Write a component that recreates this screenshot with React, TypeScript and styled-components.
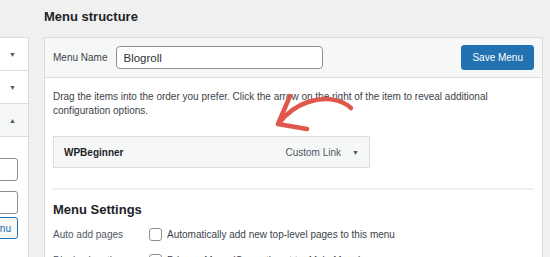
import React from "react";
import styled, { createGlobalStyle } from "styled-components";

const Global = createGlobalStyle`
  html, body {
    margin: 0;
    padding: 0;
    background: #f0f0f1;
  }
  body {
    font-family: "Liberation Sans", Arial, sans-serif;
    color: #3c434a;
    font-size: 10px;
  }
`;

const Page = styled.div`
  display: flex;
  align-items: flex-start;
  width: 550px;
  height: 257px;
  overflow: hidden;
  position: relative;
`;

const Side = styled.div`
  margin-top: 37px;
  width: 28px;
  flex-shrink: 0;
  display: flex;
  justify-content: flex-end;
  overflow: hidden;
  background: #fff;
  border-right: 1px solid #dcdcde;
  border-top: 1px solid #dcdcde;
  height: 240px;
`;

const SideInner = styled.div`
  width: 220px;
  flex-shrink: 0;
  display: flex;
  flex-direction: column;
`;

const SideRow = styled.div<{ $open?: boolean }>`
  height: 32px;
  border-bottom: 1px solid #dcdcde;
  background: ${({ $open }) => ($open ? "#f6f7f7" : "#fff")};
  display: flex;
  align-items: center;
  justify-content: flex-end;
  padding-right: 12px;
  color: #50575e;
  font-size: 7px;
`;

const SideBody = styled.div`
  display: flex;
  flex-direction: column;
  align-items: flex-end;
  padding: 21px 10px 0 0;
  gap: 10px;
`;

const SideInput = styled.div`
  width: 180px;
  height: 21px;
  border: 1px solid #8c8f94;
  border-radius: 3px;
  background: #fff;
`;

const SideButton = styled.div`
  margin-top: -7px;
  height: 20px;
  padding: 0 6px;
  border: 1px solid #2271b1;
  border-radius: 3px;
  background: #f6f7f7;
  color: #2271b1;
  display: flex;
  align-items: center;
  font-size: 10px;
`;

const Main = styled.div`
  margin-left: 15px;
  width: 499px;
  flex-shrink: 0;
`;

const Title = styled.h2`
  margin: 0;
  padding-top: 9px;
  height: 28px;
  font-size: 13px;
  line-height: 16px;
  font-weight: 700;
  color: #1d2327;
`;

const Panel = styled.div`
  background: #fff;
  border: 1px solid #dcdcde;
  border-bottom: none;
`;

const Header = styled.div`
  height: 39px;
  background: #f6f7f7;
  border-bottom: 1px solid #dcdcde;
  display: flex;
  align-items: center;
  padding: 0 8px;
  gap: 9px;
`;

const Label = styled.label`
  color: #3c434a;
  font-size: 10px;
`;

const NameInput = styled.div`
  width: 193px;
  height: 21px;
  padding: 0 6px;
  border: 1px solid #8c8f94;
  border-radius: 4px;
  background: #fff;
  display: flex;
  align-items: center;
  font-size: 11.5px;
  color: #2c3338;
`;

const SaveButton = styled.button`
  margin-left: auto;
  height: 25px;
  padding: 0 10px;
  border: 1px solid #2271b1;
  border-radius: 3px;
  background: #2271b1;
  color: #fff;
  font-family: inherit;
  font-size: 10px;
`;

const Body = styled.div`
  padding: 12px 8px 0 8px;
`;

const Help = styled.p`
  margin: 0;
  font-size: 10px;
  line-height: 14px;
  color: #3c434a;
`;

const Item = styled.div`
  margin-top: 18px;
  width: 295px;
  height: 30px;
  border: 1px solid #dcdcde;
  background: #f6f7f7;
  display: flex;
  align-items: center;
  padding: 0 10px;
`;

const ItemTitle = styled.span`
  font-weight: 700;
  color: #1d2327;
  font-size: 10px;
`;

const ItemType = styled.span`
  margin-left: auto;
  color: #50575e;
  font-size: 10px;
`;

const Caret = styled.span`
  margin-left: 11px;
  color: #50575e;
  font-size: 7px;
`;

const Divider = styled.hr`
  margin: 20px 0 0 0;
  border: none;
  border-top: 2px solid #f0f0f1;
`;

const SettingsTitle = styled.h3`
  margin: 0;
  padding-top: 12px;
  font-size: 13px;
  line-height: 16px;
  font-weight: 700;
  color: #1d2327;
`;

const Settings = styled.div`
  display: flex;
  flex-direction: column;
  gap: 4px;
  margin-top: 5px;
`;

const SettingRow = styled.div`
  display: flex;
  align-items: center;
  height: 22px;
`;

const SettingLabel = styled.span`
  width: 96px;
  flex-shrink: 0;
  color: #50575e;
  font-size: 10px;
`;

const Check = styled.span`
  width: 11px;
  height: 11px;
  border: 1px solid #8c8f94;
  border-radius: 3px;
  background: #fff;
  margin-right: 5px;
  flex-shrink: 0;
`;

const CheckText = styled.span`
  font-size: 10px;
  color: #3c434a;
`;

const Arrow = styled.svg`
  position: absolute;
  left: 268px;
  top: 88px;
  pointer-events: none;
`;

export default function App() {
  return (
    <>
      <Global />
      <Page>
        <Side>
          <SideInner>
            <SideRow>▼</SideRow>
            <SideRow>▼</SideRow>
            <SideRow $open>▲</SideRow>
            <SideBody>
              <SideInput />
              <SideInput />
              <SideButton>Add to Menu</SideButton>
            </SideBody>
          </SideInner>
        </Side>
        <Main>
          <Title>Menu structure</Title>
          <Panel>
            <Header>
              <Label>Menu Name</Label>
              <NameInput>Blogroll</NameInput>
              <SaveButton>Save Menu</SaveButton>
            </Header>
            <Body>
              <Help>
                Drag the items into the order you prefer. Click the arrow on the right of the item to reveal additional
                <br />
                configuration options.
              </Help>
              <Item>
                <ItemTitle>WPBeginner</ItemTitle>
                <ItemType>Custom Link</ItemType>
                <Caret>▼</Caret>
              </Item>
              <Divider />
              <SettingsTitle>Menu Settings</SettingsTitle>
              <Settings>
                <SettingRow>
                  <SettingLabel>Auto add pages</SettingLabel>
                  <Check />
                  <CheckText>Automatically add new top-level pages to this menu</CheckText>
                </SettingRow>
                <SettingRow>
                  <SettingLabel>Display location</SettingLabel>
                  <Check />
                  <CheckText>Primary Menu (Currently set to: Main Menu)</CheckText>
                </SettingRow>
              </Settings>
            </Body>
          </Panel>
        </Main>
        <Arrow width="100" height="50" viewBox="0 0 100 50">
          <g fill="none" stroke="#e0584b" strokeWidth="4.5" strokeLinecap="round" strokeLinejoin="round">
            <path d="M83 20 C 72 10, 55 9, 40 14 C 28 18, 17 27, 10 36" />
            <path d="M22 8 L 10 36 L 39 41" />
          </g>
        </Arrow>
      </Page>
    </>
  );
}
